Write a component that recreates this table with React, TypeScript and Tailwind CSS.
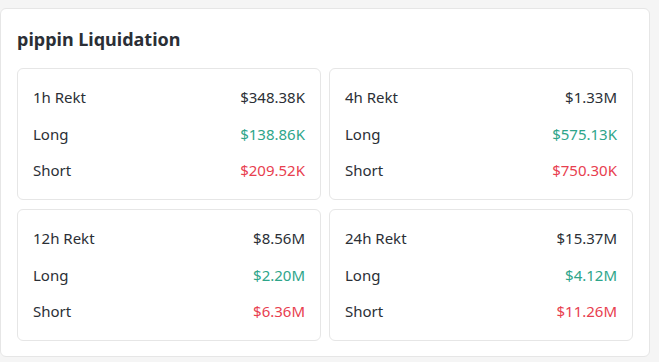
const stats = [
  { id: "1h", label: "1h Rekt", total: "$348.38K", long: "$138.86K", short: "$209.52K" },
  { id: "4h", label: "4h Rekt", total: "$1.33M", long: "$575.13K", short: "$750.30K" },
  { id: "12h", label: "12h Rekt", total: "$8.56M", long: "$2.20M", short: "$6.36M" },
  { id: "24h", label: "24h Rekt", total: "$15.37M", long: "$4.12M", short: "$11.26M" },
];

export default function App() {
  return (
    <div
      className="w-[659px] h-[362px] bg-[#f5f5f5] pt-[8px] pr-[9px]"
      style={{ fontFamily: '"Noto Sans", "Open Sans", sans-serif' }}
    >
      <div className="w-[650px] h-[349px] bg-white border border-[#e6e6e6] rounded-[6px] px-[16px] pt-[18px]">
        <h2 className="text-[18px] leading-[24px] font-bold text-[#2b2f36] mb-[17px]">pippin Liquidation</h2>

        <div className="grid grid-cols-2 gap-x-[8px] gap-y-[9px]">
          {stats.map((stat) => (
            <div
              key={stat.id}
              className="h-[132px] border border-[#e6e6e6] rounded-[6px] px-[15px] pt-[10px] text-[15px] text-[#2b2f36]"
            >
              <div className="flex justify-between items-center h-[36.5px]">
                <span>{stat.label}</span>
                <span>{stat.total}</span>
              </div>
              <div className="flex justify-between items-center h-[36.5px]">
                <span>Long</span>
                <span className="text-[#2ea58a]">{stat.long}</span>
              </div>
              <div className="flex justify-between items-center h-[36.5px]">
                <span>Short</span>
                <span className="text-[#e8404f]">{stat.short}</span>
              </div>
            </div>
          ))}
        </div>
      </div>
    </div>
  );
}
